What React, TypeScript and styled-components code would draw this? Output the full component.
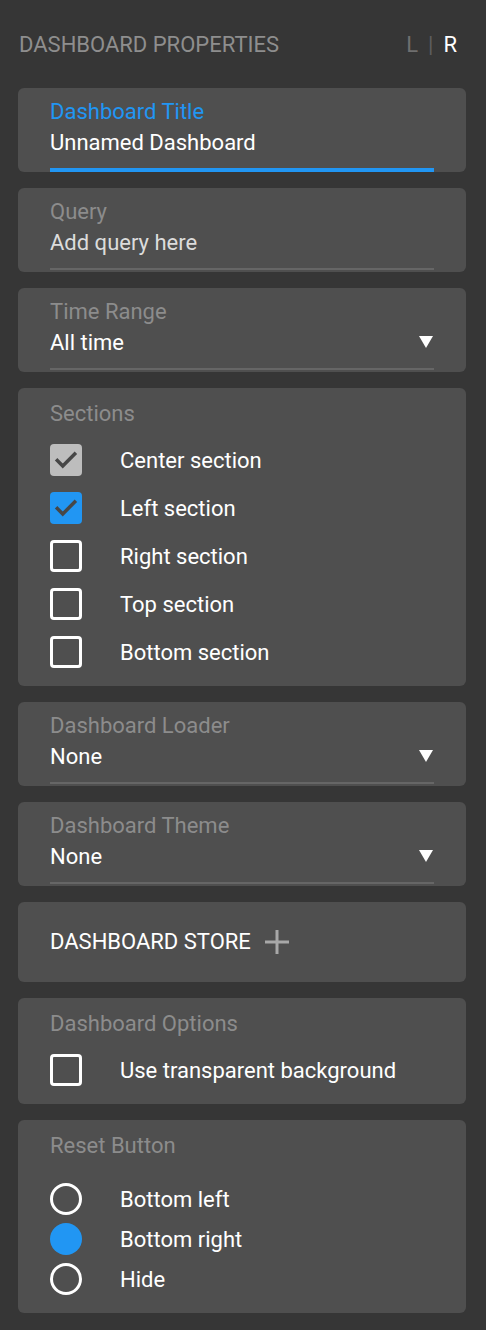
import React from 'react';
import styled, {createGlobalStyle} from 'styled-components';

const GlobalStyle = createGlobalStyle`
    html, body {
        margin: 0;
        padding: 0;
        background: #363636;
    }
    body {
        font-family: Roboto, 'Liberation Sans', sans-serif;
    }
`;

const Page = styled.div`
    width: 486px;
    min-height: 1330px;
    box-sizing: border-box;
    padding: 32px 20px 16px 18px;
    background: #363636;
    display: flex;
    flex-direction: column;
    gap: 16px;
`;

const Header = styled.div`
    display: flex;
    align-items: center;
    justify-content: space-between;
    height: 24px;
    padding: 0 9px 0 1px;
    margin-bottom: 16px;
`;

const HeaderTitle = styled.div`
    font-size: 22px;
    color: #8e8e8e;
`;

const Switch = styled.div`
    display: flex;
    align-items: center;
    gap: 10px;
    font-size: 22px;
`;

const SwitchItem = styled.span<{ $active?: boolean }>`
    color: ${p => (p.$active ? '#ffffff' : '#6f6f6f')};
`;

const Divider = styled.span`
    color: #5e5e5e;
`;

const Card = styled.div`
    background: #4f4f4f;
    border-radius: 6px;
    padding: 12px 32px 0;
    display: flex;
    flex-direction: column;
`;

const GroupCard = styled(Card)<{ $bottom?: number }>`
    padding-top: 14px;
    padding-bottom: ${p => p.$bottom ?? 10}px;
`;

const StoreCard = styled(Card)`
    padding: 22px 32px 22px;
    flex-direction: row;
    align-items: center;
    gap: 14px;
`;

const Label = styled.div<{ $focused?: boolean }>`
    font-size: 22px;
    line-height: 24px;
    color: ${p => (p.$focused ? '#2196f3' : '#8c8c8c')};
`;

const ValueRow = styled.div`
    display: flex;
    align-items: center;
    justify-content: space-between;
    height: 36px;
`;

const Value = styled.div<{ $placeholder?: boolean }>`
    font-size: 22px;
    color: ${p => (p.$placeholder ? '#dcdcdc' : '#ffffff')};
`;

const Underline = styled.div<{ $focused?: boolean }>`
    margin-top: 8px;
    height: ${p => (p.$focused ? 4 : 2)}px;
    margin-bottom: ${p => (p.$focused ? 0 : 2)}px;
    background: ${p => (p.$focused ? '#2196f3' : '#666666')};
`;

const OptionList = styled.div<{ $gap?: number }>`
    display: flex;
    flex-direction: column;
    margin-top: ${p => p.$gap ?? 10}px;
`;

const OptionRow = styled.div<{ $height?: number }>`
    display: flex;
    align-items: center;
    gap: 38px;
    height: ${p => p.$height ?? 48}px;
    font-size: 22px;
    color: #ffffff;
`;

const Box = styled.div<{ $state: 'off' | 'on' | 'disabled' }>`
    width: 32px;
    height: 32px;
    box-sizing: border-box;
    border-radius: 4px;
    flex-shrink: 0;
    display: flex;
    align-items: center;
    justify-content: center;
    border: ${p => (p.$state === 'off' ? '3px solid #ffffff' : 'none')};
    background: ${p =>
        p.$state === 'on' ? '#2196f3' : p.$state === 'disabled' ? '#bdbdbd' : 'transparent'};
`;

const Radio = styled.div<{ $checked?: boolean }>`
    width: 32px;
    height: 32px;
    box-sizing: border-box;
    border-radius: 50%;
    flex-shrink: 0;
    border: ${p => (p.$checked ? 'none' : '3px solid #ffffff')};
    background: ${p => (p.$checked ? '#2196f3' : 'transparent')};
`;

const StoreTitle = styled.div`
    font-size: 22px;
    line-height: 36px;
    color: #ffffff;
`;

const Check = () => (
    <svg width="26" height="26" viewBox="0 0 24 24">
        <path d="M4 12.5l5 5L20 6.5" fill="none" stroke="#474747" strokeWidth="3.2" strokeLinecap="square"/>
    </svg>
);

const Plus = () => (
    <svg width="24" height="24" viewBox="0 0 24 24">
        <path d="M12 0v24M0 12h24" stroke="#a8a8a8" strokeWidth="3"/>
    </svg>
);

const Arrow = () => (
    <svg width="14" height="14" viewBox="0 0 14 14" style={{marginRight: 1}}>
        <polygon points="0,1 14,1 7,13" fill="#ffffff"/>
    </svg>
);

type Field = { label: string; value: string; focused?: boolean; placeholder?: boolean; select?: boolean };

const TextField: React.FC<Field> = ({label, value, focused, placeholder, select}) => (
    <Card>
        <Label $focused={focused}>{label}</Label>
        <ValueRow>
            <Value $placeholder={placeholder}>{value}</Value>
            {select && <Arrow/>}
        </ValueRow>
        <Underline $focused={focused}/>
    </Card>
);

const sections: { name: string; state: 'off' | 'on' | 'disabled' }[] = [
    {name: 'Center section', state: 'disabled'},
    {name: 'Left section', state: 'on'},
    {name: 'Right section', state: 'off'},
    {name: 'Top section', state: 'off'},
    {name: 'Bottom section', state: 'off'},
];

const resetOptions = [
    {name: 'Bottom left', checked: false},
    {name: 'Bottom right', checked: true},
    {name: 'Hide', checked: false},
];

export default function App() {
    return (
        <>
            <GlobalStyle/>
            <Page>
                <Header>
                    <HeaderTitle>DASHBOARD PROPERTIES</HeaderTitle>
                    <Switch>
                        <SwitchItem>L</SwitchItem>
                        <Divider>|</Divider>
                        <SwitchItem $active>R</SwitchItem>
                    </Switch>
                </Header>

                <TextField label="Dashboard Title" value="Unnamed Dashboard" focused/>
                <TextField label="Query" value="Add query here" placeholder/>
                <TextField label="Time Range" value="All time" select/>

                <GroupCard>
                    <Label>Sections</Label>
                    <OptionList>
                        {sections.map(s => (
                            <OptionRow key={s.name}>
                                <Box $state={s.state}>{s.state !== 'off' && <Check/>}</Box>
                                {s.name}
                            </OptionRow>
                        ))}
                    </OptionList>
                </GroupCard>

                <TextField label="Dashboard Loader" value="None" select/>
                <TextField label="Dashboard Theme" value="None" select/>

                <StoreCard>
                    <StoreTitle>DASHBOARD STORE</StoreTitle>
                    <Plus/>
                </StoreCard>

                <GroupCard>
                    <Label>Dashboard Options</Label>
                    <OptionList>
                        <OptionRow>
                            <Box $state="off"/>
                            Use transparent background
                        </OptionRow>
                    </OptionList>
                </GroupCard>

                <GroupCard $bottom={14}>
                    <Label>Reset Button</Label>
                    <OptionList $gap={21}>
                        {resetOptions.map(o => (
                            <OptionRow key={o.name} $height={40}>
                                <Radio $checked={o.checked}/>
                                {o.name}
                            </OptionRow>
                        ))}
                    </OptionList>
                </GroupCard>
            </Page>
        </>
    );
}
